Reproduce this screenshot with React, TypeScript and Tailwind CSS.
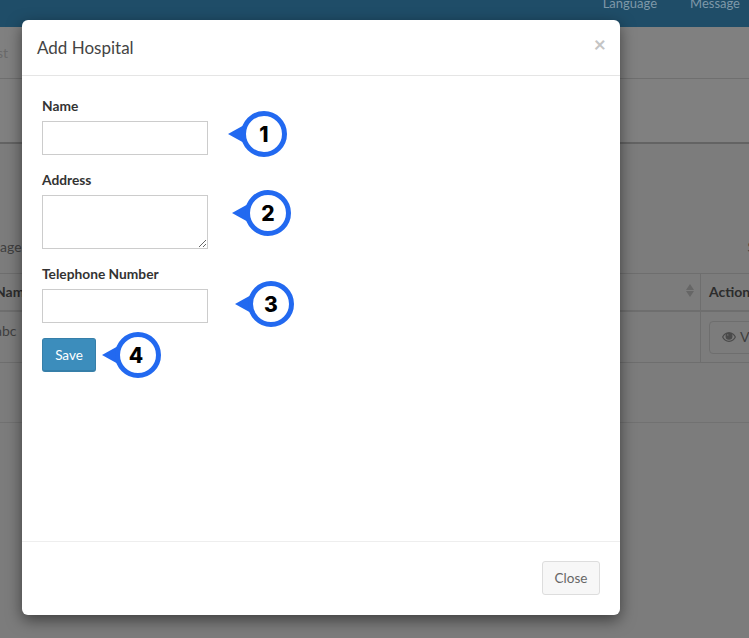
const font = { fontFamily: 'Lato, "Noto Sans", sans-serif' }

function Marker({ n, className, digitLeft = 'left-[13px]' }: { n: number; className: string; digitLeft?: string }) {
  return (
    <div className={`absolute w-[59px] h-[46px] ${className}`}>
      <svg width="59" height="46" viewBox="0 0 59 46" className="absolute left-0 top-0">
        <path d="M0 23 L18 13 L18 33 Z" fill="#2269f0" />
        <circle cx="36" cy="23" r="20.5" fill="#fff" stroke="#2269f0" strokeWidth="5" />
      </svg>
      <span className={`absolute ${digitLeft} top-[1px] w-[46px] h-[46px] flex items-center justify-center text-[21px] font-extrabold text-black font-['Inter']`}>
        {n}
      </span>
    </div>
  )
}

function EyeIcon() {
  return (
    <svg width="14" height="12" viewBox="0 0 14 12" fill="#4a4a4a">
      <path d="M7 1C3.8 1 1.3 3.3 0 6c1.3 2.7 3.8 5 7 5s5.700-2.300 7-5c-1.300-2.700-3.800-5-7-5zm0 8.800C4.500 9.800 2.500 8.300 1.300 6 2 4.700 3 3.700 4.200 3 3.800 3.600 3.500 4.300 3.500 5.200a3.500 3.500 0 0 0 7 0c0-.9-.3-1.600-.7-2.200 1.200.7 2.200 1.700 2.900 3-1.200 2.300-3.200 3.800-5.700 3.800zM5.800 3.200a.6.6 0 1 1 0 1.400.6.6 0 0 1 0-1.400z" />
    </svg>
  )
}

function BackgroundPage() {
  return (
    <div className="w-[749px] h-[638px] overflow-hidden bg-[#7c7c7c] text-[#3f3f3f] text-sm">
      <div className="h-[27px] bg-[#1f4d68] flex justify-end gap-[33px] pr-[9px] text-[13px] text-[#7e98a8] overflow-hidden">
        <span className="-mt-[6px]">Language</span>
        <span className="-mt-[6px]">Message</span>
      </div>
      <div className="h-[52px] bg-[#808080] border-b border-[#6f6f6f] flex items-center text-[#6a6a6a]">
        <span className="-ml-[3px]">st</span>
      </div>
      <div className="h-[65px] bg-[#808080] border-b-2 border-[#636363]" />
      <div className="h-[129px] relative">
        <div className="absolute left-0 bottom-[16px]">age</div>
        <div className="absolute right-[-6px] bottom-[16px]">S</div>
      </div>
      <div className="h-[39px] border-t border-b-2 border-[#6e6e6e] flex items-center">
        <span className="font-bold text-[#2c2c2c] -ml-[5px]">Nam</span>
        <div className="ml-auto w-[49px] h-full border-l border-[#6e6e6e] flex items-center pl-2 font-bold text-[#2c2c2c] whitespace-nowrap relative">
          <span className="absolute -left-[15px] top-[10px] flex flex-col gap-[1px]">
            <span className="w-0 h-0 border-x-[4px] border-x-transparent border-b-[6px] border-b-[#666]" />
            <span className="w-0 h-0 border-x-[4px] border-x-transparent border-t-[6px] border-t-[#666]" />
          </span>
          Action
        </div>
      </div>
      <div className="h-[51px] border-b border-[#6e6e6e] flex items-center">
        <span className="-mt-[12px] -ml-[5px]">abc</span>
        <div className="ml-auto w-[49px] h-full border-l border-[#6e6e6e] flex items-center pl-2 overflow-hidden">
          <div className="h-[33px] w-[60px] shrink-0 border border-[#6e6e6e] rounded flex items-center gap-1 pl-3">
            <EyeIcon />
            <span>Vi</span>
          </div>
        </div>
      </div>
      <div className="h-[60px] border-b border-[#717171]" />
    </div>
  )
}

export default function App() {
  return (
    <div className="relative w-[749px] h-[638px] overflow-hidden" style={font}>
      <BackgroundPage />
      <div className="absolute left-[22px] top-[20px] w-[598px] h-[595px] bg-white rounded-md shadow-[0_5px_15px_rgba(0,0,0,0.5)] flex flex-col text-[#333]">
        <div className="h-[56px] shrink-0 border-b border-[#e5e5e5] flex items-center justify-between pl-[15px] pr-[14px]">
          <h4 className="text-[17px] text-[#444]">Add Hospital</h4>
          <span className="text-[21px] font-bold leading-none text-[#c4c4c4] -mt-[9px]">×</span>
        </div>
        <div className="flex-1 px-[20px] pt-[21px] text-[13px]">
          <div className="flex flex-col items-start">
            <label className="font-bold leading-[18px] mb-[6px] text-[13.75px]">Name</label>
            <input className="w-[166px] h-[34px] border border-[#ccc] bg-white" />
            <label className="font-bold leading-[18px] mt-[16px] mb-[6px] text-[13.75px]">Address</label>
            <textarea className="w-[166px] h-[54px] border border-[#ccc] bg-white block" />
            <label className="font-bold leading-[18px] mt-[16px] mb-[6px] text-[13.75px]">Telephone Number</label>
            <input className="w-[166px] h-[34px] border border-[#ccc] bg-white" />
            <button className="mt-[15px] w-[54px] h-[34px] pt-[1px] rounded-[3px] bg-[#3c8dbc] border border-[#367fa9] border-b-2 text-white text-[13.5px]">
              Save
            </button>
          </div>
        </div>
        <div className="h-[74px] shrink-0 border-t border-[#eee] flex justify-end items-start pt-[19px] pr-[20px]">
          <button className="w-[58px] h-[34px] rounded-[3px] bg-[#f7f7f7] border border-[#ddd] text-[#666] text-[13.5px]">
            Close
          </button>
        </div>
      </div>
      <Marker n={1} className="left-[228px] top-[111px]" />
      <Marker n={2} className="left-[232px] top-[190px]" />
      <Marker n={3} className="left-[235px] top-[281px]" />
      <Marker n={4} className="left-[102px] top-[332px]" digitLeft="left-[11px]" />
    </div>
  )
}
